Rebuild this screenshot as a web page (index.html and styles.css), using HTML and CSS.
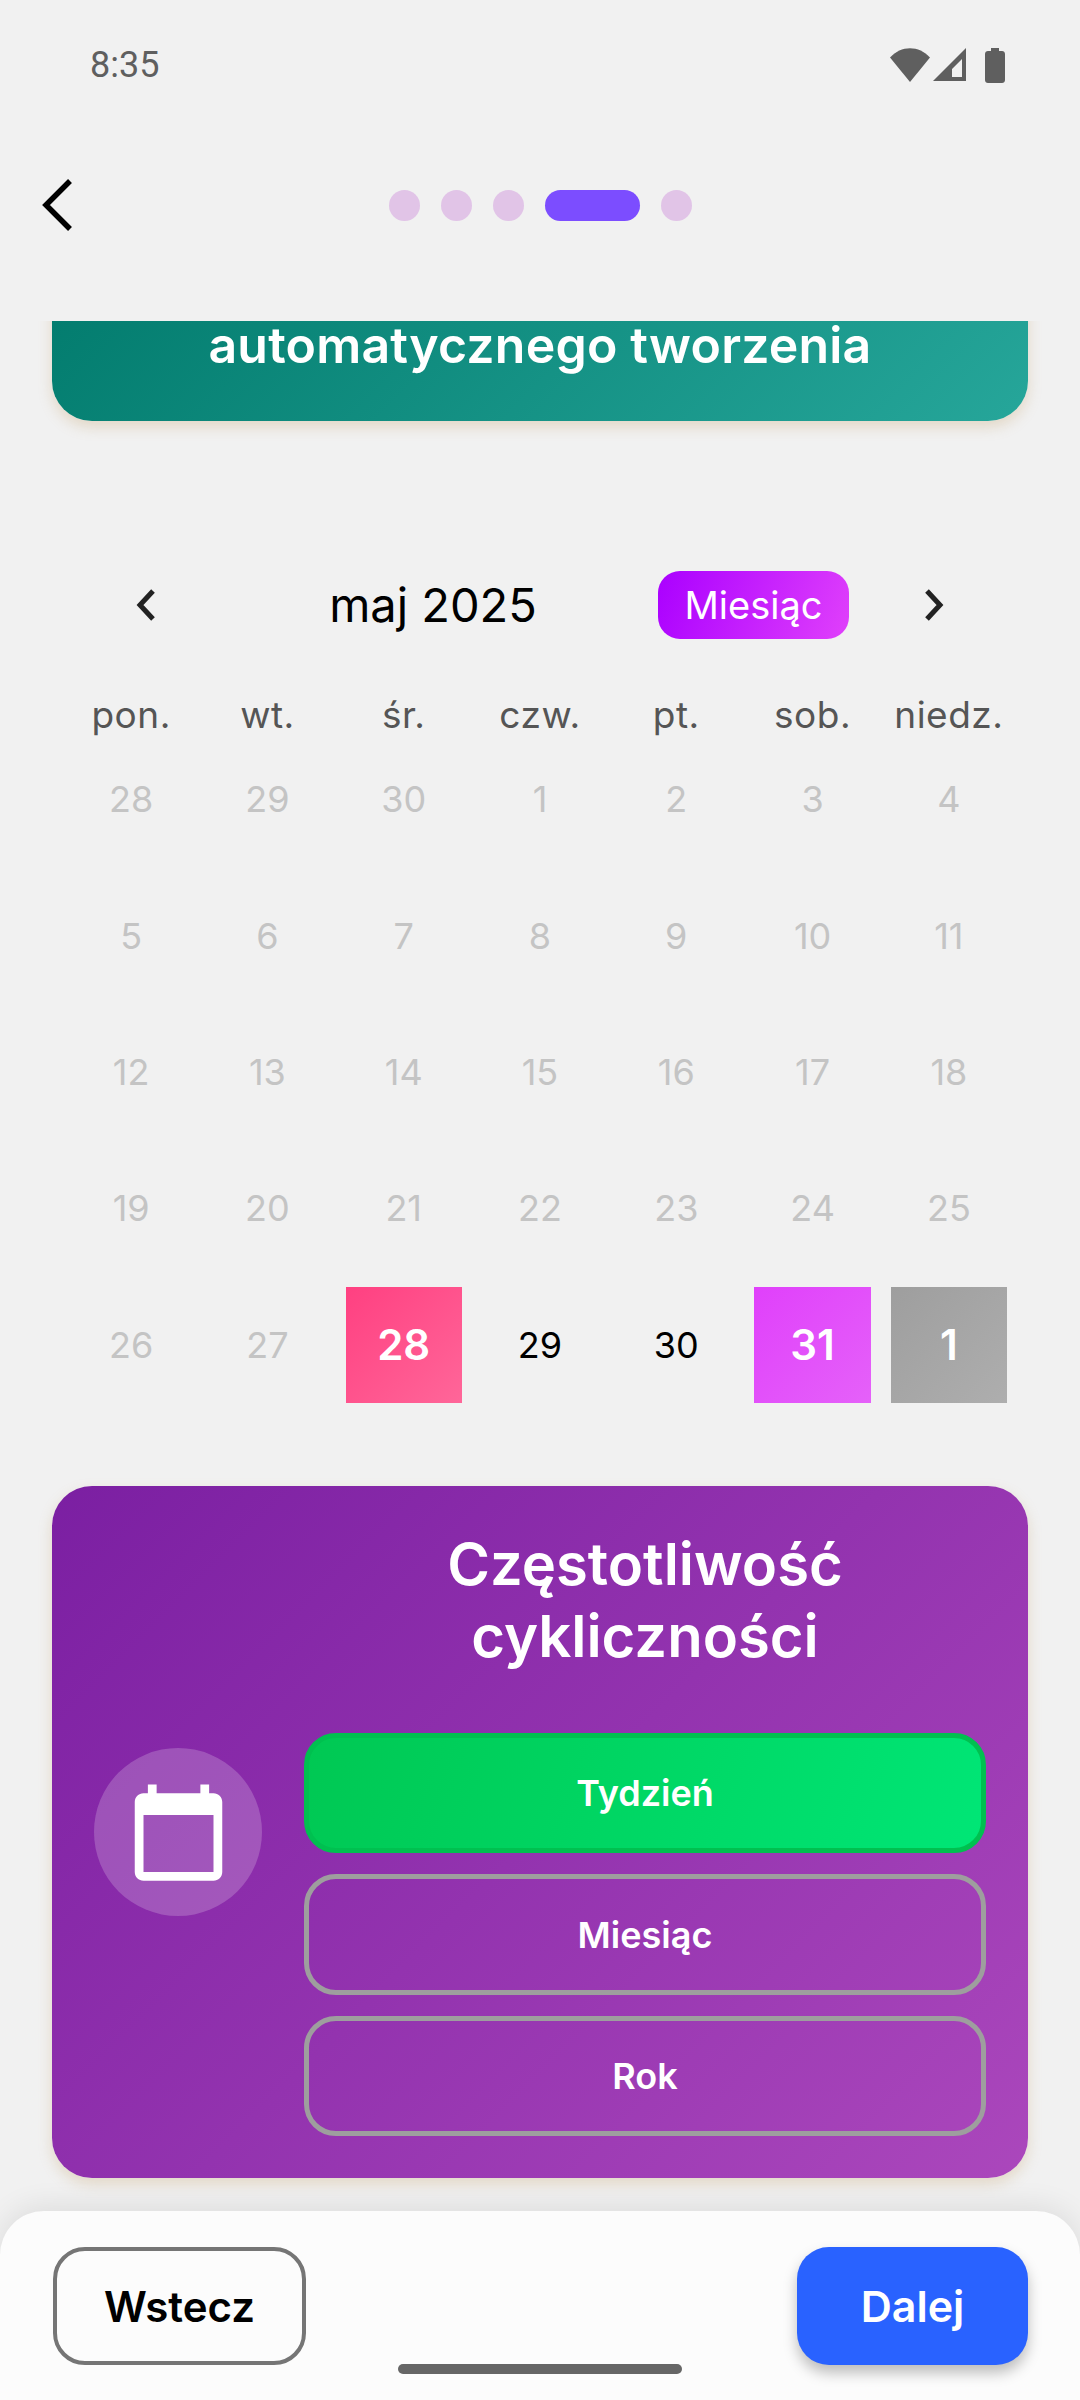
FILE: index.html
```html
<!DOCTYPE html>
<html lang="pl">
<head>
    <meta charset="UTF-8">
    <meta name="viewport" content="width=device-width, initial-scale=1.0">
    <title>Kalendarz</title>
    <link rel="stylesheet" href="styles.css">
</head>
<body>
    <div class="screen">
        <div class="status-bar">
            <span class="status-time">8:35</span>
            <div class="status-icons">
                <svg width="40" height="34" viewBox="0 0 40 34"><path d="M0 9.500 C11 -3 29 -3 40 9.500 L20 34 Z" fill="#5f5f5f"/></svg>
                <svg width="34" height="34" viewBox="0 0 34 34"><path fill-rule="evenodd" d="M33 0 V33 H0 Z M29 11 L19 21 V29 H29 Z" fill="#5f5f5f"/></svg>
                <svg class="battery" width="20" height="35" viewBox="0 0 20 35"><path d="M6 0 H14 V3 H17 C18.700 3 20 4.300 20 6 V32 C20 33.700 18.700 35 17 35 H3 C1.300 35 0 33.700 0 32 V6 C0 4.300 1.300 3 3 3 H6 Z" fill="#5f5f5f"/></svg>
            </div>
        </div>

        <div class="nav-bar">
            <svg class="back-icon" width="32" height="52" viewBox="0 0 32 52"><path d="M29 2 L5 26 L29 50" fill="none" stroke="#000" stroke-width="5.500"/></svg>
            <div class="steps">
                <span class="step"></span>
                <span class="step"></span>
                <span class="step"></span>
                <span class="step step-active"></span>
                <span class="step"></span>
            </div>
        </div>

        <main class="content">
            <section class="teal-card">
                <h2>automatycznego tworzenia</h2>
            </section>

            <section class="calendar">
                <div class="cal-header">
                    <div class="cal-arrow">
                        <svg width="20" height="32" viewBox="0 0 20 32"><path d="M17 2 L4 16 L17 30" fill="none" stroke="#222" stroke-width="5"/></svg>
                    </div>
                    <div class="cal-title">maj 2025</div>
                    <div class="cal-format">Miesiąc</div>
                    <div class="cal-arrow">
                        <svg width="20" height="32" viewBox="0 0 20 32"><path d="M3 2 L16 16 L3 30" fill="none" stroke="#222" stroke-width="5"/></svg>
                    </div>
                </div>

                <div class="cal-weekdays">
                    <span>pon.</span><span>wt.</span><span>śr.</span><span>czw.</span><span>pt.</span><span>sob.</span><span>niedz.</span>
                </div>

                <div class="cal-days">
                    <div class="day">28</div><div class="day">29</div><div class="day">30</div><div class="day">1</div><div class="day">2</div><div class="day">3</div><div class="day">4</div>
                    <div class="day">5</div><div class="day">6</div><div class="day">7</div><div class="day">8</div><div class="day">9</div><div class="day">10</div><div class="day">11</div>
                    <div class="day">12</div><div class="day">13</div><div class="day">14</div><div class="day">15</div><div class="day">16</div><div class="day">17</div><div class="day">18</div>
                    <div class="day">19</div><div class="day">20</div><div class="day">21</div><div class="day">22</div><div class="day">23</div><div class="day">24</div><div class="day">25</div>
                    <div class="day">26</div><div class="day">27</div>
                    <div class="day day-mark day-start">28</div>
                    <div class="day day-now">29</div>
                    <div class="day day-now">30</div>
                    <div class="day day-mark day-end">31</div>
                    <div class="day day-mark day-next">1</div>
                </div>
            </section>

            <section class="purple-card">
                <div class="purple-icon">
                    <svg width="105" height="105" viewBox="0 0 24 24"><path d="M20 3h-1V1h-2v2H7V1H5v2H4c-1.100 0-2 .9-2 2v16c0 1.100.9 2 2 2h16c1.100 0 2-.9 2-2V5c0-1.100-.9-2-2-2zm0 18H4V8h16v13z" fill="#fff"/></svg>
                </div>
                <div class="purple-body">
                    <h2>Częstotliwość cykliczności</h2>
                    <div class="freq-list">
                        <button class="freq freq-active">Tydzień</button>
                        <button class="freq">Miesiąc</button>
                        <button class="freq">Rok</button>
                    </div>
                </div>
            </section>
        </main>

        <footer class="bottom-bar">
            <button class="btn-back">Wstecz</button>
            <button class="btn-next">Dalej</button>
            <div class="home-bar"></div>
        </footer>
    </div>
</body>
</html>
```

FILE: styles.css
```css
* {
    margin: 0;
    padding: 0;
    box-sizing: border-box;
}
body {
    font-family: 'Inter', 'Noto Sans', sans-serif;
    background: #f1f1f1;
    color: black;
}
button {
    font-family: inherit;
    background: none;
    border: none;
}
.screen {
    width: 1080px;
    height: 2400px;
    display: flex;
    flex-direction: column;
    overflow: hidden;
}

/* Status bar */
.status-bar {
    height: 130px;
    flex-shrink: 0;
    display: flex;
    justify-content: space-between;
    align-items: center;
    padding: 0 75px 0 90px;
}
.status-time {
    font-family: 'Roboto', sans-serif;
    font-size: 36px;
    color: #5f5f5f;
}
.status-icons {
    display: flex;
    align-items: center;
    gap: 3px;
}
.battery {
    margin-left: 15px;
}

/* Top navigation */
.nav-bar {
    height: 191px;
    flex-shrink: 0;
    display: grid;
    grid-template-columns: 1fr auto 1fr;
    align-items: center;
    padding: 0 41px 41px;
}
.steps {
    display: flex;
    align-items: center;
    gap: 21px;
}
.step {
    width: 31px;
    height: 31px;
    border-radius: 50%;
    background: #e1c4e7;
}
.step-active {
    width: 95px;
    border-radius: 16px;
    background: #7c4dff;
}

/* Scrolled content */
.content {
    flex: 1;
    min-height: 0;
    overflow: hidden;
}
.teal-card {
    height: 200px;
    margin: -100px 52px 0;
    padding-bottom: 53px;
    display: flex;
    align-items: flex-end;
    justify-content: center;
    border-radius: 40px;
    background: linear-gradient(135deg, #00796b, #26a69a);
    box-shadow: 0 6px 14px rgba(190, 150, 90, 0.28);
}
.teal-card h2 {
    font-size: 50px;
    line-height: 46px;
    font-weight: 600;
    color: white;
    letter-spacing: 0.2px;
}

/* Calendar */
.calendar {
    margin-top: 150px;
    padding: 0 63px;
}
.cal-header {
    display: flex;
    align-items: center;
    height: 68px;
    padding: 0 47px;
}
.cal-arrow {
    width: 72px;
    display: flex;
    justify-content: center;
}
.cal-title {
    flex: 1;
    padding: 0 0 2px 26px;
    text-align: center;
    font-size: 47px;
}
.cal-format {
    width: 191px;
    height: 68px;
    margin-right: 49px;
    display: flex;
    align-items: center;
    justify-content: center;
    border-radius: 22px;
    font-size: 38px;
    color: white;
    background: linear-gradient(110deg, #aa00ff, #e040fb);
}
.cal-weekdays {
    display: grid;
    grid-template-columns: repeat(7, 1fr);
    margin-top: 60px;
    line-height: 32px;
    font-size: 37px;
    letter-spacing: 0.5px;
    text-align: center;
    color: #555;
}
.cal-days {
    display: grid;
    grid-template-columns: repeat(7, 1fr);
    grid-auto-rows: 136.4px;
}
.day {
    display: flex;
    align-items: center;
    justify-content: center;
    font-size: 36px;
    color: #c4c4c4;
}
.day-now {
    color: black;
}
.day-mark {
    margin: 10px;
    font-size: 42px;
    font-weight: 600;
    color: white;
}
.day-start {
    background: linear-gradient(135deg, #ff4081, #ff6699);
}
.day-end {
    background: linear-gradient(135deg, #e040fb, #e561f9);
}
.day-next {
    background: linear-gradient(135deg, #9e9e9e, #aeaeae);
}

/* Frequency card */
.purple-card {
    margin: 73px 52px 0;
    padding: 42px;
    display: flex;
    align-items: center;
    gap: 42px;
    border-radius: 40px;
    background: linear-gradient(135deg, #7b1fa2, #ab47bc);
    box-shadow: 0 6px 14px rgba(190, 150, 90, 0.28);
}
.purple-icon {
    width: 168px;
    height: 168px;
    flex-shrink: 0;
    display: flex;
    align-items: center;
    justify-content: center;
    border-radius: 50%;
    background: rgba(255, 255, 255, 0.2);
}
.purple-body {
    flex: 1;
}
.purple-body h2 {
    font-size: 58px;
    line-height: 72px;
    font-weight: 600;
    text-align: center;
    color: white;
    padding: 0 40px;
}
.freq-list {
    margin-top: 61px;
    display: flex;
    flex-direction: column;
    gap: 21px;
}
.freq {
    height: 120.500px;
    border: 5px solid #9e9e9e;
    border-radius: 32px;
    font-size: 36px;
    font-weight: 600;
    color: white;
}
.freq-active {
    border-color: #00c050;
    background: linear-gradient(110deg, #00c853, #00e676);
}

/* Bottom bar */
.bottom-bar {
    position: relative;
    height: 189px;
    flex-shrink: 0;
    padding: 36px 52px 0 53px;
    display: flex;
    justify-content: space-between;
    align-items: flex-start;
    border-radius: 44px 44px 0 0;
    background: #fcfcfc;
    box-shadow: 0 -4px 30px rgba(0, 0, 0, 0.09);
}
.btn-back {
    width: 253px;
    height: 118px;
    border: 4px solid #757575;
    border-radius: 32px;
    font-size: 42px;
    font-weight: 600;
    color: black;
}
.btn-next {
    width: 231px;
    height: 118px;
    border-radius: 32px;
    font-size: 43px;
    font-weight: 600;
    color: white;
    background: #2962ff;
    box-shadow: 0 8px 14px rgba(0, 0, 0, 0.25);
}
.home-bar {
    position: absolute;
    left: 398px;
    bottom: 26px;
    width: 284px;
    height: 10px;
    border-radius: 5px;
    background: #666;
}
```
